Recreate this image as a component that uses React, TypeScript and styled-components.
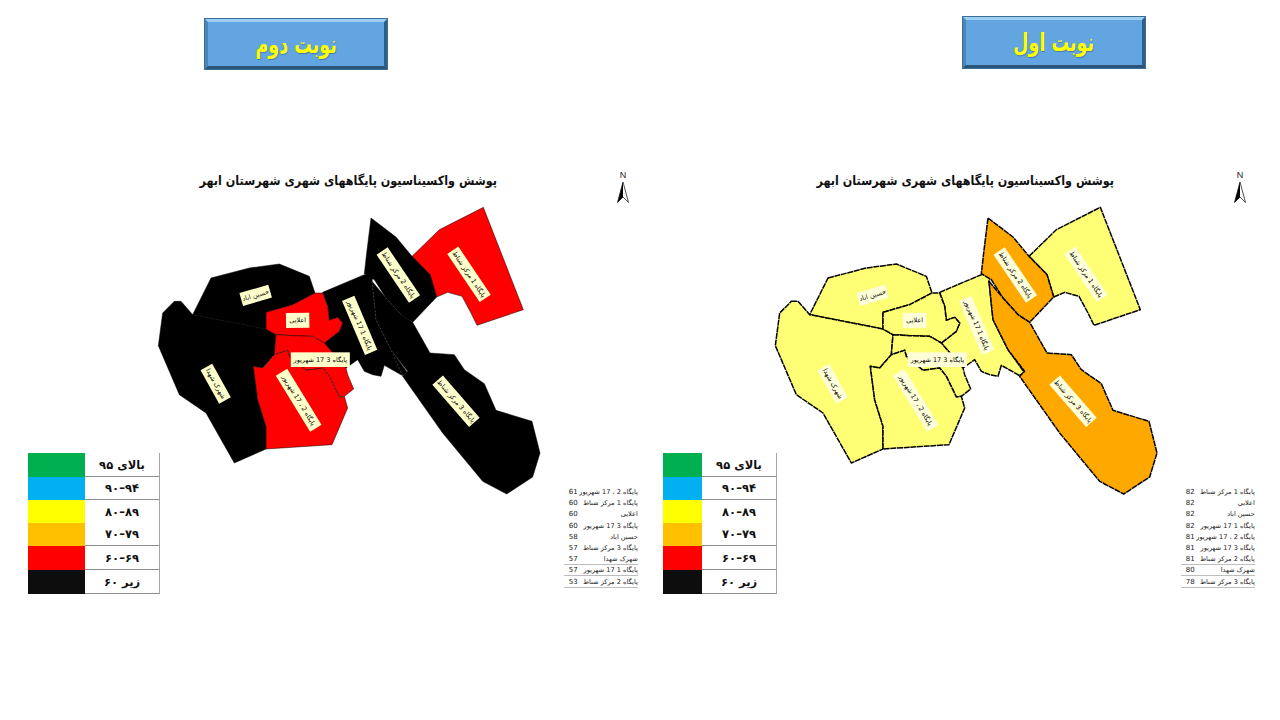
import React from "react";
import styled, { createGlobalStyle } from "styled-components";

const Global = createGlobalStyle`
  html, body { margin: 0; padding: 0; background: #fff; }
  #root { width: 1280px; height: 720px; overflow: hidden; }
`;

const FONT = `"DejaVu Sans", "Liberation Sans", sans-serif`;

const Slide = styled.div`
  display: flex;
  width: 1280px;
  height: 720px;
  background: #fff;
  font-family: ${FONT};
`;
const Panel = styled.section`
  width: 640px;
  display: flex;
  flex-direction: column;
`;
const TopRow = styled.div<{ $left: number; $top: number }>`
  height: 170px;
  box-sizing: border-box;
  padding: ${(p) => p.$top}px 0 0 ${(p) => p.$left}px;
`;
const TurnButton = styled.div<{ $h: number }>`
  width: 184px;
  height: ${(p) => p.$h}px;
  box-sizing: border-box;
  background: #62a5e0;
  border-style: solid;
  border-width: 4px;
  border-color: #9dcff5 #2f5f88 #2a5578 #4a86b8;
  outline: 1px solid #3c6f98;
  outline-offset: -1px;
  display: flex;
  align-items: center;
  justify-content: center;
`;
const TurnText = styled.span`
  display: inline-block;
  color: #ffff00;
  font-size: 25px;
  font-weight: 700;
  direction: rtl;
  white-space: nowrap;
  transform: scaleX(0.7);
  text-shadow: 1px 1px 1px rgba(30, 60, 90, 0.4);
`;
const Header = styled.div<{ $right: number }>`
  height: 33px;
  display: flex;
  justify-content: flex-end;
  align-items: flex-start;
  gap: 119px;
  padding-right: ${(p) => p.$right}px;
`;
const Title = styled.h2`
  margin: 2px 0 0;
  font-size: 12.8px;
  line-height: 18px;
  font-weight: 700;
  color: #111;
  direction: rtl;
  white-space: nowrap;
  transform: scaleX(0.875);
  transform-origin: right center;
`;
const NorthBox = styled.svg`
  display: block;
  width: 14px;
  height: 33px;
`;
const Body = styled.div<{ $left: number }>`
  display: flex;
  align-items: flex-start;
  padding-left: ${(p) => p.$left}px;
`;
const Legend = styled.div<{ $swatch: number; $label: number }>`
  margin-top: 250px;
  flex: none;
  display: grid;
  grid-template-columns: ${(p) => p.$swatch}px ${(p) => p.$label}px;
  grid-template-rows: 24px 23px 23px 23px 24px 24px;
`;
const Swatch = styled.div<{ $c: string }>`
  background: ${(p) => p.$c};
`;
const LegendLabel = styled.div<{ $line?: boolean }>`
  box-sizing: border-box;
  display: flex;
  align-items: center;
  justify-content: center;
  border-right: 1px solid #a6a6a6;
  border-bottom: ${(p) => (p.$line ? "1px solid #8c8c8c" : "0")};
  font-size: 11.5px;
  font-weight: 700;
  color: #111;
  direction: rtl;
  unicode-bidi: plaintext;
`;
const MapSvg = styled.svg`
  display: block;
  flex: none;
  width: 390px;
  height: 297px;
  margin-left: -3.7px;
`;
const Ranking = styled.div`
  margin: 283px 0 0 17.5px;
  width: 74px;
  flex: none;
  font-size: 6.6px;
  color: #222;
`;
const RankRow = styled.div<{ $line?: boolean }>`
  box-sizing: border-box;
  height: 11.3px;
  display: flex;
  justify-content: space-between;
  align-items: center;
  white-space: nowrap;
  border-bottom: ${(p) => (p.$line ? "1px solid #bdbdbd" : "0")};
`;
const RankValue = styled.span`
  font-size: 7px;
  padding-left: 5px;
`;
const RankName = styled.span`
  direction: rtl;
`;

type Pt = number[][];
const P: Record<string, Pt> = {
  b1: [[808,290],[890,210],[1022,143],[1142,450],[1003,497],[985,460],[958,410],[915,398],[882,412],[862,345]],
  b2: [[685,175],[760,232],[808,290],[862,345],[882,412],[810,488],[775,465],[730,415],[695,360],[665,342],[672,280]],
  b3: [[688,365],[730,415],[775,465],[810,488],[862,580],[935,585],[965,630],[1025,672],[1060,752],[1168,785],[1192,880],[1170,952],[1092,1003],[1020,965],[900,820],[780,650],[795,635],[745,570],[700,480]],
  s1: [[540,398],[665,345],[692,345],[688,365],[700,480],[745,570],[793,637],[780,648],[725,617],[715,650],[690,645],[665,635],[645,600],[610,625],[545,550],[590,515],[600,490],[585,473],[560,482],[555,440]],
  al: [[370,458],[450,435],[517,400],[540,400],[555,440],[560,482],[585,473],[600,490],[590,515],[545,550],[510,530],[450,528],[400,525],[370,508]],
  ha: [[205,355],[320,325],[410,313],[500,350],[517,400],[450,435],[370,458],[370,508],[150,465]],
  sh: [[95,425],[115,425],[150,465],[370,508],[400,525],[395,585],[360,625],[332,620],[345,720],[370,800],[370,868],[275,910],[190,760],[110,705],[47,558],[60,460]],
  s3: [[400,525],[450,528],[510,530],[545,550],[610,625],[615,645],[633,688],[605,710],[590,712],[560,650],[540,625],[490,632],[440,590],[435,572],[395,585]],
  s2: [[360,625],[395,585],[435,572],[440,590],[490,632],[540,625],[560,650],[590,712],[605,710],[615,745],[568,855],[370,868],[370,800],[345,720],[332,620]],
};

type Lab = { t: string; x: number; y: number; w: number; h: number; a: number };
const LABELS: Lab[] = [
  { t: "پایگاه 1 مرکز شناط", x: 979, y: 344, w: 174, h: 40, a: 56 },
  { t: "پایگاه 2 مرکز شناط", x: 767, y: 346, w: 174, h: 40, a: 56 },
  { t: "پایگاه 3 مرکز شناط", x: 940, y: 725, w: 168, h: 42, a: 49 },
  { t: "پایگاه 1 17 شهریور", x: 651, y: 497, w: 176, h: 40, a: 67 },
  { t: "پایگاه 2 ، 17 شهریور", x: 468, y: 722, w: 197, h: 40, a: 58.5 },
  { t: "شهرک شهدا", x: 219, y: 672, w: 115, h: 40, a: 61 },
  { t: "حسین اباد", x: 339, y: 407, w: 90, h: 40, a: -16 },
  { t: "اعلایی", x: 465, y: 482, w: 70, h: 45, a: -1 },
  { t: "پایگاه 3 17 شهریور", x: 533, y: 600, w: 177, h: 44, a: 0 },
];

const LabelBox = styled.rect<{ $fill: string }>`
  fill: ${(p) => p.$fill};
`;
const LabelText = styled.text`
  font-family: ${FONT};
  font-size: 19.5px;
  fill: #000;
  direction: rtl;
  text-anchor: middle;
  dominant-baseline: central;
`;

const pts = (p: Pt) => p.map(([x, y]) => `${x},${y}`).join(" ");

function CityMap({ fills, stroke, strokeW, dash, labelFill, accents }: {
  fills: Record<string, string>; stroke: string; strokeW: number; dash?: string; labelFill: string; accents?: boolean;
}) {
  const order = ["ha", "sh", "s1", "al", "s3", "s2", "b1", "b2", "b3"];
  return (
    <MapSvg viewBox="40 130 1170 891">
      {order.map((k) => (
        <polygon key={k} points={pts(P[k])} fill={fills[k]} stroke={stroke} strokeWidth={strokeW} strokeDasharray={dash} strokeLinejoin="round" />
      ))}
      {accents && (
        <g fill="none" stroke="#666" strokeWidth={2} strokeDasharray="4 7">
          <polyline points={pts([[688,365],[700,480],[745,570],[780,650]])} />
          <polyline points={pts([[730,415],[775,465]])} />
          <polyline points={pts([[360,625],[395,585],[435,572]])} />
          <polyline points={pts([[540,625],[560,650],[590,712],[605,710]])} />
        </g>
      )}
      {LABELS.map((l) => (
        <g key={l.t} transform={`rotate(${l.a} ${l.x} ${l.y})`}>
          <LabelBox $fill={labelFill} x={l.x - l.w / 2} y={l.y - l.h / 2} width={l.w} height={l.h} />
          <LabelText x={l.x} y={l.y}>{l.t}</LabelText>
        </g>
      ))}
    </MapSvg>
  );
}

const North = () => (
  <NorthBox viewBox="0 0 14 33">
    <text x="7" y="8" textAnchor="middle" fontSize="9" fontFamily='"Liberation Sans", sans-serif' fill="#222">N</text>
    <polygon points="7,12 1.5,32.5 7,27 12.5,32.5" fill="#fff" stroke="#222" strokeWidth="0.8" strokeLinejoin="round" />
    <polygon points="7,12 7,27 1.5,32.5" fill="#000" />
  </NorthBox>
);

const LEGEND = [
  { c: "#00b050", t: "بالای ۹۵", line: true },
  { c: "#00b0f0", t: "۹۰–۹۴", line: true },
  { c: "#ffff00", t: "۸۰–۸۹", line: false },
  { c: "#ffc000", t: "۷۰–۷۹", line: true },
  { c: "#ff0000", t: "۶۰–۶۹", line: true },
  { c: "#0d0d0d", t: "زیر ۶۰", line: true },
];

const LegendTable = ({ swatch, label }: { swatch: number; label: number }) => (
  <Legend $swatch={swatch} $label={label}>
    {LEGEND.map((r) => (
      <React.Fragment key={r.c}>
        <Swatch $c={r.c} />
        <LegendLabel $line={r.line}>{r.t}</LegendLabel>
      </React.Fragment>
    ))}
  </Legend>
);

const RankList = ({ rows }: { rows: [string, number][] }) => (
  <Ranking>
    {rows.map(([n, v], i) => (
      <RankRow key={n} $line={i >= 6}>
        <RankValue>{v}</RankValue>
        <RankName>{n}</RankName>
      </RankRow>
    ))}
  </Ranking>
);

const LEFT_ROWS: [string, number][] = [
  ["پایگاه 2 ، 17 شهریور", 61], ["پایگاه 1 مرکز شناط", 60], ["اعلایی", 60],
  ["پایگاه 3 17 شهریور", 60], ["حسین اباد", 58], ["پایگاه 3 مرکز شناط", 57],
  ["شهرک شهدا", 57], ["پایگاه 1 17 شهریور", 57], ["پایگاه 2 مرکز شناط", 53],
];
const RIGHT_ROWS: [string, number][] = [
  ["پایگاه 1 مرکز شناط", 82], ["اعلایی", 82], ["حسین اباد", 82],
  ["پایگاه 1 17 شهریور", 82], ["پایگاه 2 ، 17 شهریور", 81], ["پایگاه 3 17 شهریور", 81],
  ["پایگاه 2 مرکز شناط", 81], ["شهرک شهدا", 80], ["پایگاه 3 مرکز شناط", 78],
];

const Y = "#ffff75";
const O = "#ffa900";
const R = "#ff0000";
const K = "#000000";
const TITLE = "پوشش واکسیناسیون پایگاههای شهری شهرستان ابهر";

export default function App() {
  return (
    <Slide>
      <Global />
      <Panel>
        <TopRow $left={204} $top={18}><TurnButton $h={52}><TurnText>نوبت دوم</TurnText></TurnButton></TopRow>
        <Header $right={10}><Title>{TITLE}</Title><North /></Header>
        <Body $left={28}>
          <LegendTable swatch={57} label={75} />
          <CityMap stroke="#000" strokeW={1.5} labelFill="#ffffcc" accents
            fills={{ b1: R, b2: K, b3: K, s1: K, al: R, ha: K, sh: K, s3: R, s2: R }} />
          <RankList rows={LEFT_ROWS} />
        </Body>
      </Panel>
      <Panel>
        <TopRow $left={322} $top={16}><TurnButton $h={53}><TurnText>نوبت اول</TurnText></TurnButton></TopRow>
        <Header $right={33}><Title>{TITLE}</Title><North /></Header>
        <Body $left={23}>
          <LegendTable swatch={39} label={75} />
          <CityMap stroke="#000" strokeW={4.5} dash="18 2" labelFill="#ffffd9"
            fills={{ b1: Y, b2: O, b3: O, s1: Y, al: Y, ha: Y, sh: Y, s3: Y, s2: Y }} />
          <RankList rows={RIGHT_ROWS} />
        </Body>
      </Panel>
    </Slide>
  );
}
